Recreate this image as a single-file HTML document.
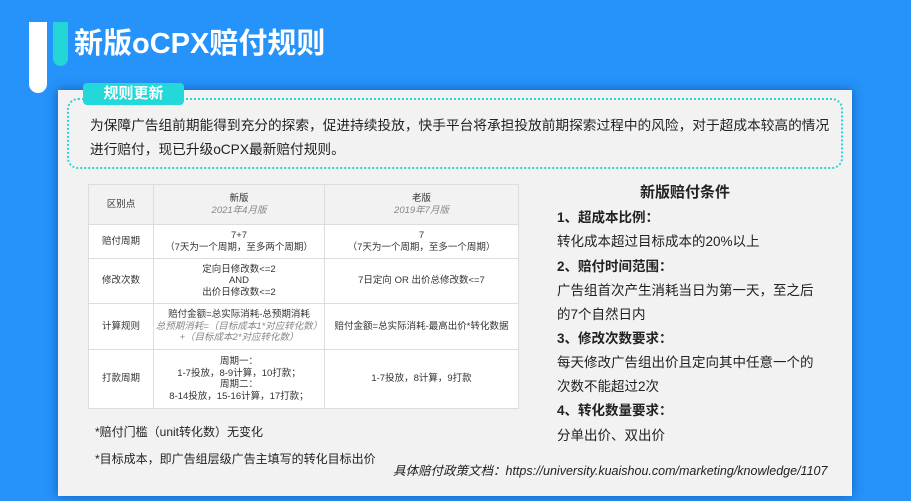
<!DOCTYPE html>
<html><head><meta charset="utf-8"><style>
*{margin:0;padding:0;box-sizing:border-box}
body{width:911px;height:501px;background:#2593f9;position:relative;overflow:hidden;font-family:"Liberation Sans","Noto Sans CJK SC",sans-serif;color:#222}
.a{position:absolute}
.wb{left:29px;top:22px;width:18px;height:71px;background:#fff;border-radius:0 0 9px 9px}
.tb{left:53px;top:22px;width:15px;height:44px;background:#22d6d6;border-radius:0 0 8px 8px}
.title{left:74px;top:20px;font-size:29px;font-weight:bold;color:#fff;white-space:nowrap}
.panel{left:58px;top:90px;width:794px;height:406px;background:#f2f2f2;box-shadow:0 0 10px rgba(0,40,120,.5)}
.dot{left:67px;top:98px;width:776px;height:71px;border:2px dotted #2ad6d6;border-radius:11px}
.tag{left:83px;top:83px;width:101px;height:22px;background:#22d8d8;border-radius:4px;color:#fff;font-weight:bold;font-size:15px;text-align:center;line-height:22px}
.intro{left:90px;top:114px;width:740px;font-size:13.7px;line-height:24px}
table{position:absolute;left:88px;top:184px;width:431px;border-collapse:collapse;background:#fff;font-size:9.5px;color:#333;text-align:center}
td{border:1px solid #ddd;line-height:11.5px}
.h td{background:#f2f2f2}
i{color:#888}
.r{left:557px;font-size:13.5px;white-space:nowrap}
.b{font-weight:bold}
.fn{left:95px;font-size:12px;white-space:nowrap}
</style></head><body>
<div class="a wb"></div><div class="a tb"></div>
<div class="a title">新版oCPX赔付规则</div>
<div class="a panel"></div>
<div class="a dot"></div>
<div class="a tag">规则更新</div>
<div class="a intro">为保障广告组前期能得到充分的探索，促进持续投放，快手平台将承担投放前期探索过程中的风险，对于超成本较高的情况进行赔付，现已升级oCPX最新赔付规则。</div>
<table>
<tr class="h" style="height:40px"><td style="width:65px">区别点</td><td style="width:171px">新版<br><i>2021年4月版</i></td><td>老版<br><i>2019年7月版</i></td></tr>
<tr style="height:34px"><td>赔付周期</td><td>7+7<br>（7天为一个周期，至多两个周期）</td><td>7<br>（7天为一个周期，至多一个周期）</td></tr>
<tr style="height:45px"><td>修改次数</td><td>定向日修改数&lt;=2<br>AND<br>出价日修改数&lt;=2</td><td>7日定向 OR 出价总修改数&lt;=7</td></tr>
<tr style="height:46px"><td>计算规则</td><td>赔付金额=总实际消耗-总预期消耗<br><i>总预期消耗=（目标成本1*对应转化数）+（目标成本2*对应转化数）</i></td><td>赔付金额=总实际消耗-最高出价*转化数据</td></tr>
<tr style="height:59px"><td>打款周期</td><td>周期一：<br>1-7投放，8-9计算，10打款；<br>周期二：<br>8-14投放，15-16计算，17打款；</td><td>1-7投放，8计算，9打款</td></tr>
</table>
<div class="a fn" style="top:423px">*赔付门槛（unit转化数）无变化</div>
<div class="a fn" style="top:450px">*目标成本，即广告组层级广告主填写的转化目标出价</div>
<div class="a" style="left:393px;top:460px;font-size:12.5px;font-style:italic;white-space:nowrap">具体赔付政策文档：https://university.kuaishou.com/marketing/knowledge/1107</div>
<div class="a b" style="left:640px;top:181px;font-size:15px">新版赔付条件</div>
<div class="a r b" style="top:206px">1、超成本比例：</div>
<div class="a r" style="top:230px">转化成本超过目标成本的20%以上</div>
<div class="a r b" style="top:255px">2、赔付时间范围：</div>
<div class="a r" style="top:279px">广告组首次产生消耗当日为第一天，至之后</div>
<div class="a r" style="top:303px">的7个自然日内</div>
<div class="a r b" style="top:327px">3、修改次数要求：</div>
<div class="a r" style="top:351px">每天修改广告组出价且定向其中任意一个的</div>
<div class="a r" style="top:375px">次数不能超过2次</div>
<div class="a r b" style="top:399px">4、转化数量要求：</div>
<div class="a r" style="top:424px">分单出价、双出价</div>
</body></html>
